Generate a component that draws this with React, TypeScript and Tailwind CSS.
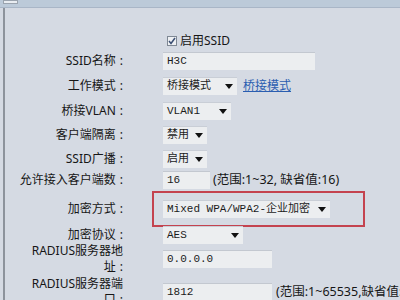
import React from "react";

const labelFont = { fontFamily: '"Noto Sans", "Noto Sans CJK SC", sans-serif' };
const valueFont = { fontFamily: '"Liberation Mono", "Noto Sans CJK SC", monospace' };

function Caret() {
  return (
    <svg width="8" height="5" viewBox="0 0 8 5" className="shrink-0">
      <path d="M0 0 L8 0 L4 5 Z" fill="#111" />
    </svg>
  );
}

function Select({ value, width }: { value: string; width: string }) {
  return (
    <div
      className={`${width} h-[18px] flex items-center justify-between pl-[4px] pr-[4px] bg-[#eceef0] border-t border-[#c9ced6] text-[11px] text-[#1b1b1b]`}
      style={valueFont}
    >
      <span className="whitespace-nowrap">{value}</span>
      <Caret />
    </div>
  );
}

function Input({ value, width }: { value: string; width: string }) {
  return (
    <div
      className={`${width} h-[18px] flex items-center pl-[4px] bg-[#eceef0] border-t border-[#c3c8d0] text-[11px] text-[#1b1b1b]`}
      style={valueFont}
    >
      {value}
    </div>
  );
}

function Row({
  label,
  h,
  gap = "gap-[6px]",
  children,
}: {
  label: React.ReactNode;
  h: string;
  gap?: string;
  children?: React.ReactNode;
}) {
  return (
    <div className={`flex items-center shrink-0 ${h}`}>
      <div
        className="w-[118px] text-right text-[12px] leading-[16px] text-[#161616] shrink-0"
        style={labelFont}
      >
        {label}
        <span className="ml-[4px]">:</span>
      </div>
      <div className={`ml-[40px] flex items-center ${gap}`}>{children}</div>
    </div>
  );
}

export default function App() {
  return (
    <div className="w-[400px] h-[300px] overflow-hidden bg-[#d5dae3] flex flex-col">
      {/* top band */}
      <div className="h-[8px] bg-[#bccad9] border-b border-[#a9b6c7] flex shrink-0">
        <div className="ml-[3px] w-[15px] h-[4px] bg-[#e9edf2] border border-[#9aa3ae]" />
      </div>
      <div className="flex-1 ml-[3px] border-l-2 border-[#8d939c] flex flex-col">
        <div className="h-[23px] shrink-0" />
        <div className="flex items-center h-[20px] shrink-0">
          <div className="ml-[162px] flex items-center gap-[3px]">
            <div className="w-[10px] h-[10px] bg-[#eef0f3] border border-[#7f8894] flex items-center justify-center">
              <svg width="8" height="8" viewBox="0 0 8 8">
                <path d="M1 4 L3 6.5 L7 1" stroke="#3b4f73" strokeWidth="1.5" fill="none" />
              </svg>
            </div>
            <span className="text-[12px] text-[#161616]" style={labelFont}>启用SSID</span>
          </div>
        </div>
        <Row label="SSID名称" h="h-[20px]">
          <Input value="H3C" width="w-[152px]" />
        </Row>
        <Row label="工作模式" h="h-[30px]">
          <Select value="桥接模式" width="w-[74px]" />
          <span className="text-[12px] text-[#2a5db0] underline" style={labelFont}>桥接模式</span>
        </Row>
        <Row label="桥接VLAN" h="h-[20px]">
          <Select value="VLAN1" width="w-[68px]" />
        </Row>
        <Row label="客户端隔离" h="h-[28px]">
          <Select value="禁用" width="w-[44px]" />
        </Row>
        <Row label="SSID广播" h="h-[20px]">
          <Select value="启用" width="w-[44px]" />
        </Row>
        <Row label="允许接入客户端数" h="h-[22px]" gap="gap-[3px]">
          <Input value="16" width="w-[47px]" />
          <span className="text-[12.5px] text-[#161616] whitespace-nowrap" style={labelFont}>
            (范围:1~32, 缺省值:16)
          </span>
        </Row>
        <Row label="加密方式" h="h-[36px]">
          <div className="-ml-[11px] w-[213px] h-[36px] border-2 border-[#c4434f] flex items-center pl-[9px]">
            <Select value="Mixed WPA/WPA2-企业加密" width="w-[167px]" />
          </div>
        </Row>
        <Row label="加密协议" h="h-[16px]">
          <Select value="AES" width="w-[80px]" />
        </Row>
        <Row label={<>RADIUS服务器地<br />址</>} h="h-[32px]">
          <Input value="0.0.0.0" width="w-[109px]" />
        </Row>
        <Row label={<>RADIUS服务器端<br />口</>} h="h-[34px]" gap="gap-[4px]">
          <Input value="1812" width="w-[109px]" />
          <span className="text-[12.5px] text-[#161616] whitespace-nowrap" style={labelFont}>
            (范围:1~65535,缺省值:1812)
          </span>
        </Row>
      </div>
    </div>
  );
}
